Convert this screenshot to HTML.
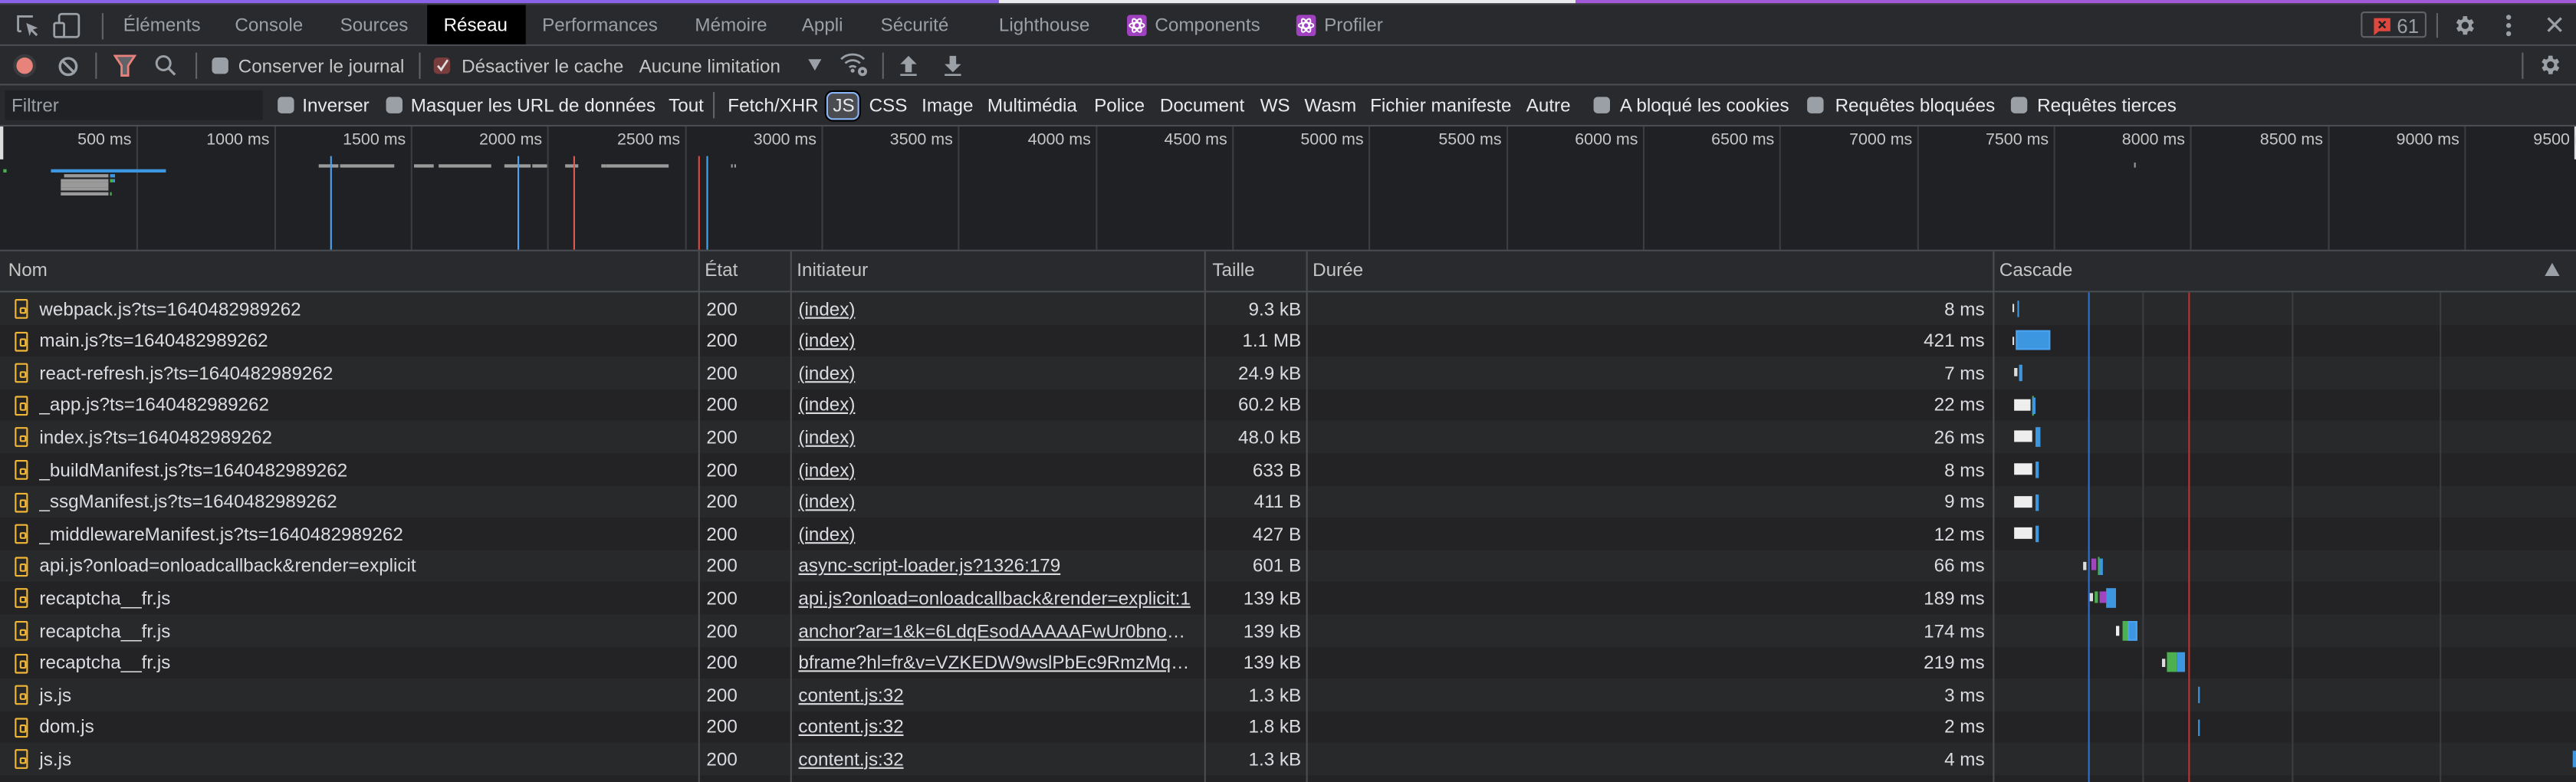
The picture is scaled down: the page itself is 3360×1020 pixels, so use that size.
<!DOCTYPE html>
<html><head><meta charset="utf-8"><style>
*{margin:0;padding:0;box-sizing:border-box}
html,body{width:3360px;height:1020px;overflow:hidden;background:#202124}
#w{position:absolute;left:0;top:0;width:1568px;height:476px;transform:scale(2.142857);transform-origin:0 0;font-family:"Liberation Sans",sans-serif;font-size:11.3px;color:#dadce0;background:#292a2d;overflow:hidden}
.a{position:absolute;white-space:nowrap}
.t{color:#9aa0a6;top:4px;height:24px;line-height:24px}
.hl{position:absolute;left:0;width:1568px;height:1px;background:#494c50}
.vs{position:absolute;width:1px;background:#5f6368}
.cb{position:absolute;width:10px;height:10px;border-radius:2.5px;background:#9aa0a6}
.f{top:53px;height:24px;line-height:24px;color:#e8eaed}
.tk{position:absolute;top:77px;width:1px;height:75px;background:#3c3d40}
.tl{position:absolute;top:80px;color:#c4c7c5;font-size:10px;text-align:right;width:60px}
.ov{position:absolute;background:#9a9a9a;height:2.3px}
.r{position:absolute;left:0;width:1568px;height:19.6px;line-height:19.6px}
.r span{position:absolute;white-space:nowrap;top:1.5px}
.r .n{left:24px}.r .s{left:430px}.r .i{left:486px;text-decoration:underline;max-width:243px;overflow:hidden;text-overflow:ellipsis}
.r .z{right:776px}.r .d{right:360px}
.r .ic{left:9px;top:4px;width:8px;height:12px;border:1.3px solid #f2b636;border-radius:1px}
.r .ic:after{content:"";position:absolute;left:1.5px;top:3.5px;width:2px;height:2.5px;border:0.7px solid #f2b636;border-radius:1px}
.b{position:absolute}
.tb{top:29.5px;line-height:23px;color:#c4c7c5}
</style></head><body><div id="w">
<div class="a" style="left:0;top:0;width:608px;height:2px;background:#8a63e8"></div>
<div class="a" style="left:608px;top:0;width:351px;height:2px;background:#e8eaed"></div>
<div class="a" style="left:959px;top:0;width:609px;height:2px;background:#a35ad9"></div>
<div class="a" style="left:0;top:2px;width:1568px;height:1px;background:#3c3d40"></div>
<svg class="a" style="left:8px;top:7px" width="48" height="17" viewBox="0 0 48 17"><path d="M3 12V3h9M3 12h2" stroke="#9aa0a6" stroke-width="1.3" fill="none"/><path d="M8 7l7 3-3 1 3 3-1 1-3-3-1 3z" fill="#9aa0a6"/><rect x="28" y="1.5" width="12" height="14" rx="1.5" stroke="#9aa0a6" stroke-width="1.3" fill="none"/><rect x="25" y="7" width="6" height="8.5" rx="1" stroke="#9aa0a6" stroke-width="1.3" fill="#292a2d"/></svg>
<div class="vs" style="left:62px;top:8px;height:16px"></div>
<div class="a t" style="left:75px">Éléments</div>
<div class="a t" style="left:143px">Console</div>
<div class="a t" style="left:207px">Sources</div>
<div class="a" style="left:260px;top:3px;width:60px;height:24px;background:#000"></div>
<div class="a t" style="left:270px;color:#fff">Réseau</div>
<div class="a t" style="left:330px">Performances</div>
<div class="a t" style="left:423px">Mémoire</div>
<div class="a t" style="left:488px">Appli</div>
<div class="a t" style="left:536px">Sécurité</div>
<div class="a t" style="left:608px">Lighthouse</div>
<svg class="a" style="left:686px;top:9px" width="12" height="13" viewBox="0 0 12 13"><rect width="12" height="13" rx="2" fill="#a042c0"/><g stroke="#fff" stroke-width=".9" fill="none"><ellipse cx="6" cy="6.5" rx="4.5" ry="1.7"/><ellipse cx="6" cy="6.5" rx="4.5" ry="1.7" transform="rotate(60 6 6.5)"/><ellipse cx="6" cy="6.5" rx="4.5" ry="1.7" transform="rotate(-60 6 6.5)"/></g></svg>
<div class="a t" style="left:703px">Components</div>
<svg class="a" style="left:789px;top:9px" width="12" height="13" viewBox="0 0 12 13"><rect width="12" height="13" rx="2" fill="#a042c0"/><g stroke="#fff" stroke-width=".9" fill="none"><ellipse cx="6" cy="6.5" rx="4.5" ry="1.7"/><ellipse cx="6" cy="6.5" rx="4.5" ry="1.7" transform="rotate(60 6 6.5)"/><ellipse cx="6" cy="6.5" rx="4.5" ry="1.7" transform="rotate(-60 6 6.5)"/></g></svg>
<div class="a t" style="left:806px">Profiler</div>
<div class="a" style="left:1437px;top:7px;width:40px;height:16px;border:1px solid #5f6368;border-radius:2px"></div>
<svg class="a" style="left:1444px;top:9.5px" width="12" height="12" viewBox="0 0 12 12"><path d="M1 1h10v8H4l-3 2.5z" fill="#e0473e"/><path d="M4 3l4 4M8 3l-4 4" stroke="#222" stroke-width="1.2"/></svg>
<div class="a" style="left:1459px;top:7.5px;line-height:16px;color:#9aa0a6;font-size:12px">61</div>
<div class="vs" style="left:1483px;top:8px;height:15px"></div>
<svg class="a" style="left:1493px;top:8px" width="15" height="15" viewBox="0 0 24 24"><path fill="#9aa0a6" d="M19.4 13a7.5 7.5 0 0 0 0-2l2.1-1.6-2-3.5-2.5 1a7.6 7.6 0 0 0-1.7-1L15 3h-4l-.4 2.9c-.6.3-1.2.6-1.7 1l-2.5-1-2 3.5L6.6 11a7.5 7.5 0 0 0 0 2l-2.1 1.6 2 3.5 2.5-1c.5.4 1.1.7 1.7 1L11 21h4l.4-2.9c.6-.3 1.2-.6 1.700-1l2.5 1 2-3.5zM13 15.5a3.5 3.5 0 1 1 0-7 3.5 3.5 0 0 1 0 7z" transform="translate(-1 0)"/></svg>
<svg class="a" style="left:1524px;top:8px" width="6" height="15"><circle cx="3" cy="2.5" r="1.5" fill="#9aa0a6"/><circle cx="3" cy="7.5" r="1.5" fill="#9aa0a6"/><circle cx="3" cy="12.5" r="1.5" fill="#9aa0a6"/></svg>
<svg class="a" style="left:1550px;top:10px" width="10" height="10"><path d="M1 1l8 8M9 1L1 9" stroke="#9aa0a6" stroke-width="1.5"/></svg>
<div class="hl" style="top:27px"></div>
<div class="a" style="left:8px;top:32.5px;width:14px;height:14px;border-radius:7px;background:#3a3b3e"></div>
<div class="a" style="left:10px;top:34.5px;width:10px;height:10px;border-radius:5px;background:#e8837b"></div>
<svg class="a" style="left:35px;top:33.5px" width="13" height="13"><circle cx="6.5" cy="6.5" r="5" stroke="#9aa0a6" stroke-width="1.6" fill="none"/><path d="M3 3l7 7" stroke="#9aa0a6" stroke-width="1.6"/></svg>
<div class="vs" style="left:58px;top:32px;height:16px"></div>
<svg class="a" style="left:69px;top:33px" width="14" height="14"><path d="M1 1h12L9 7v6H5V7z" stroke="#e8837b" stroke-width="1.3" fill="#5f6368"/></svg>
<svg class="a" style="left:94px;top:33px" width="14" height="14"><circle cx="5.5" cy="5.5" r="4.2" stroke="#9aa0a6" stroke-width="1.4" fill="none"/><path d="M8.5 8.5l4 4" stroke="#9aa0a6" stroke-width="1.5"/></svg>
<div class="vs" style="left:119px;top:32px;height:16px"></div>
<div class="cb" style="left:129px;top:35px"></div>
<div class="a tb" style="left:145px">Conserver le journal</div>
<div class="vs" style="left:255px;top:32px;height:16px"></div>
<div class="cb" style="left:264px;top:35px;background:#7a3d3d"></div>
<svg class="a" style="left:265px;top:35px" width="9" height="10"><path d="M1.5 5l2 2.5 4-6" stroke="#ddd" stroke-width="1.3" fill="none"/></svg>
<div class="a tb" style="left:281px">Désactiver le cache</div>
<div class="a tb" style="left:389px">Aucune limitation</div>
<svg class="a" style="left:492px;top:36px" width="8" height="7"><path d="M0 0h8L4 7z" fill="#9aa0a6"/></svg>
<svg class="a" style="left:511px;top:31px" width="18" height="16" viewBox="0 0 18 16"><path d="M1 5a10 10 0 0 1 14 0M3.5 7.5a6.5 6.5 0 0 1 9 0M6 10a3 3 0 0 1 4 0" stroke="#9aa0a6" stroke-width="1.3" fill="none"/><circle cx="8" cy="12" r="1.2" fill="#9aa0a6"/><circle cx="14" cy="12.5" r="2.8" fill="#9aa0a6"/><circle cx="14" cy="12.5" r="1" fill="#292a2d"/></svg>
<div class="vs" style="left:537px;top:32px;height:16px"></div>
<svg class="a" style="left:547px;top:33px" width="12" height="14"><path d="M6 1l5 5H8v5H4V6H1z" fill="#9aa0a6"/><rect x="1" y="12" width="10" height="1.2" fill="#9aa0a6"/></svg>
<svg class="a" style="left:574px;top:33px" width="12" height="14"><path d="M6 11l5-5H8V1H4v5H1z" fill="#9aa0a6"/><rect x="1" y="12" width="10" height="1.2" fill="#9aa0a6"/></svg>
<div class="vs" style="left:1535px;top:32px;height:16px"></div>
<svg class="a" style="left:1545px;top:32px" width="15" height="15" viewBox="0 0 24 24"><path fill="#9aa0a6" d="M19.4 13a7.5 7.5 0 0 0 0-2l2.1-1.6-2-3.5-2.5 1a7.6 7.6 0 0 0-1.7-1L15 3h-4l-.4 2.9c-.6.3-1.2.6-1.7 1l-2.5-1-2 3.5L6.6 11a7.5 7.5 0 0 0 0 2l-2.1 1.6 2 3.5 2.5-1c.5.4 1.1.7 1.7 1L11 21h4l.4-2.9c.6-.3 1.2-.6 1.7-1l2.5 1 2-3.5zM13 15.5a3.5 3.5 0 1 1 0-7 3.5 3.5 0 0 1 0 7z" transform="translate(-1 0)"/></svg>
<div class="hl" style="top:51px"></div>
<div class="a" style="left:3px;top:55px;width:157px;height:18px;background:#202124"></div>
<div class="a f" style="left:7px;color:#9aa0a6">Filtrer</div>
<div class="cb" style="left:169px;top:59px"></div><div class="a f" style="left:184px">Inverser</div>
<div class="cb" style="left:235px;top:59px"></div><div class="a f" style="left:250px">Masquer les URL de données</div>
<div class="a f" style="left:407px">Tout</div>
<div class="vs" style="left:434px;top:56px;height:16px"></div>
<div class="a f" style="left:443px">Fetch/XHR</div>
<div class="a" style="left:503px;top:56px;width:20px;height:17px;border:1.5px solid #8ab4f8;border-radius:4px;background:#4a4c50;box-shadow:0 0 0 1px #000"></div>
<div class="a f" style="left:507px">JS</div>
<div class="a f" style="left:529px">CSS</div>
<div class="a f" style="left:561px">Image</div>
<div class="a f" style="left:601px">Multimédia</div>
<div class="a f" style="left:666px">Police</div>
<div class="a f" style="left:706px">Document</div>
<div class="a f" style="left:767px">WS</div>
<div class="a f" style="left:794px">Wasm</div>
<div class="a f" style="left:834px">Fichier manifeste</div>
<div class="a f" style="left:929px">Autre</div>
<div class="cb" style="left:970px;top:59px"></div><div class="a f" style="left:986px">A bloqué les cookies</div>
<div class="cb" style="left:1100px;top:59px"></div><div class="a f" style="left:1117px">Requêtes bloquées</div>
<div class="cb" style="left:1224px;top:59px"></div><div class="a f" style="left:1240px">Requêtes tierces</div>
<div class="hl" style="top:76px"></div>
<div class="a" style="left:0;top:77px;width:1568px;height:75px;background:#202124"></div>
<div class="a" style="left:0;top:77px;width:1.5px;height:20px;background:#ddd"></div>
<div class="a" style="left:1566.5px;top:77px;width:1.5px;height:20px;background:#ddd"></div>
<div class="tk" style="left:83px"></div><div class="tk" style="left:167px"></div><div class="tk" style="left:250px"></div><div class="tk" style="left:333px"></div><div class="tk" style="left:417px"></div><div class="tk" style="left:500px"></div><div class="tk" style="left:583px"></div><div class="tk" style="left:667px"></div><div class="tk" style="left:750px"></div><div class="tk" style="left:833px"></div><div class="tk" style="left:917px"></div><div class="tk" style="left:1000px"></div><div class="tk" style="left:1083px"></div><div class="tk" style="left:1167px"></div><div class="tk" style="left:1250px"></div><div class="tk" style="left:1333px"></div><div class="tk" style="left:1417px"></div><div class="tk" style="left:1500px"></div>
<div class="tl" style="left:20px">500 ms</div><div class="tl" style="left:104px">1000 ms</div><div class="tl" style="left:187px">1500 ms</div><div class="tl" style="left:270px">2000 ms</div><div class="tl" style="left:354px">2500 ms</div><div class="tl" style="left:437px">3000 ms</div><div class="tl" style="left:520px">3500 ms</div><div class="tl" style="left:604px">4000 ms</div><div class="tl" style="left:687px">4500 ms</div><div class="tl" style="left:770px">5000 ms</div><div class="tl" style="left:854px">5500 ms</div><div class="tl" style="left:937px">6000 ms</div><div class="tl" style="left:1020px">6500 ms</div><div class="tl" style="left:1104px">7000 ms</div><div class="tl" style="left:1187px">7500 ms</div><div class="tl" style="left:1270px">8000 ms</div><div class="tl" style="left:1354px">8500 ms</div><div class="tl" style="left:1437px">9000 ms</div><div class="tl" style="text-align:left;left:1542px">9500 ms</div>
<div class="ov" style="left:194px;top:100px;width:12px"></div><div class="ov" style="left:207.4px;top:100px;width:32.5px"></div>
<div class="ov" style="left:252px;top:100px;width:12px"></div><div class="ov" style="left:267px;top:100px;width:32px"></div>
<div class="ov" style="left:306.5px;top:100px;width:16.5px"></div><div class="ov" style="left:324px;top:100px;width:8.7px"></div>
<div class="ov" style="left:343.7px;top:100px;width:8.3px"></div><div class="ov" style="left:365.5px;top:100px;width:3px"></div><div class="ov" style="left:369.3px;top:100px;width:37.5px"></div>
<div class="ov" style="left:445px;top:100px;width:1px"></div><div class="ov" style="left:447px;top:100px;width:1px"></div>
<div class="ov" style="left:1299px;top:99px;width:1px;height:3px"></div>
<div class="ov" style="left:1.5px;top:103px;width:2px;background:#4caf50"></div>
<div class="ov" style="left:30.7px;top:103px;width:70px;background:#3d97e0"></div>
<div class="ov" style="left:39px;top:105.8px;width:27px"></div><div class="ov" style="left:67px;top:105.8px;width:3px;background:#3d97e0"></div>
<div class="ov" style="left:36.6px;top:108.6px;width:29px"></div><div class="ov" style="left:66.5px;top:108.6px;width:2px;background:#4caf50"></div><div class="ov" style="left:68.6px;top:108.6px;width:1.4px;background:#3d97e0"></div>
<div class="ov" style="left:36.6px;top:111.4px;width:29px"></div>
<div class="ov" style="left:36.6px;top:114.2px;width:29px"></div>
<div class="ov" style="left:36.6px;top:117px;width:29px"></div><div class="ov" style="left:66.5px;top:117px;width:1.5px;background:#4caf50"></div>
<div class="a" style="left:200.6px;top:95px;width:1px;height:57px;background:#4aa3f0"></div>
<div class="a" style="left:314.6px;top:95px;width:1px;height:57px;background:#4aa3f0"></div>
<div class="a" style="left:349px;top:95px;width:1px;height:57px;background:#e0574d"></div>
<div class="a" style="left:424.8px;top:95px;width:1.6px;height:57px;background:#e0473e"></div>
<div class="a" style="left:430.3px;top:95px;width:1px;height:57px;background:#4aa3f0"></div>
<div class="hl" style="top:151.5px;height:1.5px"></div>
<div class="a" style="left:0;top:153px;width:1568px;height:24px;background:#292a2d"></div>
<div class="a" style="left:5px;top:153px;line-height:24px;color:#c4c7c5">Nom</div>
<div class="a" style="left:429px;top:153px;line-height:24px;color:#c4c7c5">État</div>
<div class="a" style="left:485px;top:153px;line-height:24px;color:#c4c7c5">Initiateur</div>
<div class="a" style="left:738px;top:153px;line-height:24px;color:#c4c7c5">Taille</div>
<div class="a" style="left:799px;top:153px;line-height:24px;color:#c4c7c5">Durée</div>
<div class="a" style="left:1217px;top:153px;line-height:24px;color:#c4c7c5">Cascade</div>
<svg class="a" style="left:1549px;top:160px" width="9" height="8"><path d="M4.5 0L9 8H0z" fill="#9aa0a6"/></svg>
<div class="hl" style="top:177px"></div>
<div class="r" style="top:178px;background:#28292b"><i class="b ic"></i><span class="n">webpack.js?ts=1640482989262</span><span class="s">200</span><span class="i">(index)</span><span class="z">9.3 kB</span><span class="d">8 ms</span></div>
<div class="r" style="top:197.6px;background:#232325"><i class="b ic"></i><span class="n">main.js?ts=1640482989262</span><span class="s">200</span><span class="i">(index)</span><span class="z">1.1 MB</span><span class="d">421 ms</span></div>
<div class="r" style="top:217.2px;background:#28292b"><i class="b ic"></i><span class="n">react-refresh.js?ts=1640482989262</span><span class="s">200</span><span class="i">(index)</span><span class="z">24.9 kB</span><span class="d">7 ms</span></div>
<div class="r" style="top:236.8px;background:#232325"><i class="b ic"></i><span class="n">_app.js?ts=1640482989262</span><span class="s">200</span><span class="i">(index)</span><span class="z">60.2 kB</span><span class="d">22 ms</span></div>
<div class="r" style="top:256.4px;background:#28292b"><i class="b ic"></i><span class="n">index.js?ts=1640482989262</span><span class="s">200</span><span class="i">(index)</span><span class="z">48.0 kB</span><span class="d">26 ms</span></div>
<div class="r" style="top:276px;background:#232325"><i class="b ic"></i><span class="n">_buildManifest.js?ts=1640482989262</span><span class="s">200</span><span class="i">(index)</span><span class="z">633 B</span><span class="d">8 ms</span></div>
<div class="r" style="top:295.6px;background:#28292b"><i class="b ic"></i><span class="n">_ssgManifest.js?ts=1640482989262</span><span class="s">200</span><span class="i">(index)</span><span class="z">411 B</span><span class="d">9 ms</span></div>
<div class="r" style="top:315.2px;background:#232325"><i class="b ic"></i><span class="n">_middlewareManifest.js?ts=1640482989262</span><span class="s">200</span><span class="i">(index)</span><span class="z">427 B</span><span class="d">12 ms</span></div>
<div class="r" style="top:334.8px;background:#28292b"><i class="b ic"></i><span class="n">api.js?onload=onloadcallback&amp;render=explicit</span><span class="s">200</span><span class="i">async-script-loader.js?1326:179</span><span class="z">601 B</span><span class="d">66 ms</span></div>
<div class="r" style="top:354.4px;background:#232325"><i class="b ic"></i><span class="n">recaptcha__fr.js</span><span class="s">200</span><span class="i">api.js?onload=onloadcallback&amp;render=explicit:1</span><span class="z">139 kB</span><span class="d">189 ms</span></div>
<div class="r" style="top:374px;background:#28292b"><i class="b ic"></i><span class="n">recaptcha__fr.js</span><span class="s">200</span><span class="i">anchor?ar=1&amp;k=6LdqEsodAAAAAFwUr0bnoHxyz</span><span class="z">139 kB</span><span class="d">174 ms</span></div>
<div class="r" style="top:393.6px;background:#232325"><i class="b ic"></i><span class="n">recaptcha__fr.js</span><span class="s">200</span><span class="i">bframe?hl=fr&amp;v=VZKEDW9wslPbEc9RmzMqaxyz</span><span class="z">139 kB</span><span class="d">219 ms</span></div>
<div class="r" style="top:413.2px;background:#28292b"><i class="b ic"></i><span class="n">js.js</span><span class="s">200</span><span class="i">content.js:32</span><span class="z">1.3 kB</span><span class="d">3 ms</span></div>
<div class="r" style="top:432.8px;background:#232325"><i class="b ic"></i><span class="n">dom.js</span><span class="s">200</span><span class="i">content.js:32</span><span class="z">1.8 kB</span><span class="d">2 ms</span></div>
<div class="r" style="top:452.4px;background:#28292b"><i class="b ic"></i><span class="n">js.js</span><span class="s">200</span><span class="i">content.js:32</span><span class="z">1.3 kB</span><span class="d">4 ms</span></div>
<div class="r" style="top:472px;background:#232325"></div>
<div class="vs" style="left:425px;top:153px;height:323px;background:#4a4c50"></div>
<div class="vs" style="left:481px;top:153px;height:323px;background:#4a4c50"></div>
<div class="vs" style="left:733px;top:153px;height:323px;background:#4a4c50"></div>
<div class="vs" style="left:795px;top:153px;height:323px;background:#4a4c50"></div>
<div class="vs" style="left:1213px;top:153px;height:323px;background:#4a4c50"></div>
<div class="vs" style="left:1304px;top:178px;height:298px;background:#3c3d40"></div>
<div class="vs" style="left:1395px;top:178px;height:298px;background:#3c3d40"></div>
<div class="vs" style="left:1485px;top:178px;height:298px;background:#3c3d40"></div>
<div class="vs" style="left:1271px;top:178px;height:298px;background:#2f6fd0"></div>
<div class="vs" style="left:1332px;top:178px;height:298px;background:#b8352d"></div>
<div class="b" style="left:1224.5px;top:185px;width:1.7px;height:5px;background:#ddd"></div><div class="b" style="left:1227.6px;top:183px;width:1.8px;height:10px;background:#3d97e0"></div>
<div class="b" style="left:1224.5px;top:204.5px;width:1.7px;height:5px;background:#ddd"></div><div class="b" style="left:1227.4px;top:201px;width:20.5px;height:12px;background:#3d97e0;border:1px solid #4aa3f0"></div>
<div class="b" style="left:1226.4px;top:224px;width:1.7px;height:5px;background:#ddd"></div><div class="b" style="left:1229.3px;top:222px;width:1.7px;height:10px;background:#3d97e0"></div>
<div class="b" style="left:1226.4px;top:242.5px;width:9.4px;height:7px;background:#eee"></div><div class="b" style="left:1236.6px;top:241px;width:.6px;height:12px;background:#4caf50"></div><div class="b" style="left:1237.3px;top:241.5px;width:2.1px;height:10px;background:#3d97e0"></div>
<div class="b" style="left:1226.4px;top:262px;width:10.4px;height:7px;background:#eee"></div><div class="b" style="left:1239.4px;top:260px;width:2.9px;height:12px;background:#3d97e0"></div>
<div class="b" style="left:1226.4px;top:282px;width:10.4px;height:7px;background:#eee"></div><div class="b" style="left:1239.4px;top:281px;width:2px;height:10px;background:#3d97e0"></div>
<div class="b" style="left:1226.4px;top:301.5px;width:10.4px;height:7px;background:#eee"></div><div class="b" style="left:1239.4px;top:300.5px;width:2px;height:10px;background:#3d97e0"></div>
<div class="b" style="left:1226.4px;top:321px;width:10.4px;height:7px;background:#eee"></div><div class="b" style="left:1239.4px;top:320px;width:2px;height:10px;background:#3d97e0"></div>
<div class="b" style="left:1268.4px;top:342px;width:1.9px;height:5px;background:#ddd"></div><div class="b" style="left:1273px;top:340px;width:3px;height:7px;background:#a044c0"></div><div class="b" style="left:1276.6px;top:339px;width:.8px;height:11px;background:#4caf50"></div><div class="b" style="left:1278px;top:340px;width:2px;height:10px;background:#3d97e0"></div>
<div class="b" style="left:1272.2px;top:361px;width:1.5px;height:5px;background:#ddd"></div><div class="b" style="left:1274.8px;top:360px;width:2px;height:7px;background:#4caf50"></div><div class="b" style="left:1278px;top:360px;width:3.5px;height:7px;background:#a044c0"></div><div class="b" style="left:1282.3px;top:358px;width:5.7px;height:12px;background:#3d97e0"></div>
<div class="b" style="left:1288.3px;top:381px;width:2.2px;height:6px;background:#eee"></div><div class="b" style="left:1291.7px;top:378px;width:2.9px;height:12px;background:#4caf50"></div><div class="b" style="left:1294.6px;top:378px;width:6.4px;height:12px;background:#3d97e0;border:.8px solid #4aa3f0"></div>
<div class="b" style="left:1316px;top:401px;width:1.7px;height:5px;background:#ddd"></div><div class="b" style="left:1318.8px;top:397px;width:5.8px;height:12px;background:#4caf50"></div><div class="b" style="left:1324.6px;top:397px;width:5.4px;height:12px;background:#3d97e0"></div>
<div class="b" style="left:1337.5px;top:418px;width:1.5px;height:10px;background:#3d97e0"></div>
<div class="b" style="left:1337.5px;top:437.5px;width:1.5px;height:10px;background:#3d97e0"></div>
<div class="b" style="left:1566px;top:457px;width:1.5px;height:10px;background:#3d97e0"></div>
</div></body></html>
